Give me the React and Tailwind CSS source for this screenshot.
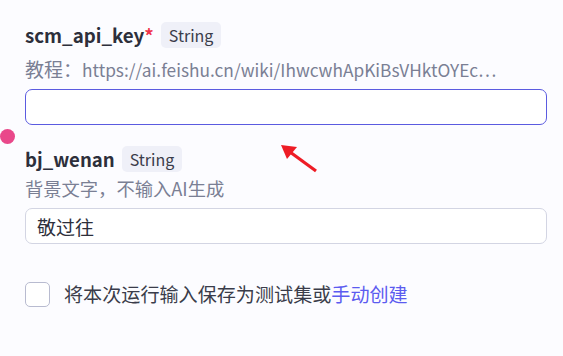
import React from "react";

const Tag = () => (
  <span className="ml-[7px] inline-flex h-[26px] items-center rounded-[5px] bg-[#eff0f8] px-[8px] text-[16px] text-[#3a3c4a]">
    String
  </span>
);

export default function App() {
  return (
    <div
      className="relative h-[356px] w-[563px] overflow-hidden bg-[#fcfcff]"
      style={{ fontFamily: '"Noto Sans CJK SC", "Noto Sans", sans-serif' }}
    >
      <div className="pl-[25px] pr-[16px] pt-[22px]">
        {/* scm_api_key */}
        <div className="flex h-[26px] items-center">
          <span className="text-[18.7px] font-semibold text-[#2d2f3b]">scm_api_key</span>
          <span className="text-[18.7px] font-semibold text-[#f0344a]">*</span>
          <Tag />
        </div>
        <div className="mt-[10px] h-[22px] whitespace-nowrap leading-[22px] text-[#7a7f94]">
          <span className="text-[19px]">教程：</span>
          <span className="text-[17.3px]">https://ai.feishu.cn/wiki/IhwcwhApKiBsVHktOYEc⋯</span>
        </div>
        <input
          className="mt-[9px] block h-[36px] w-[522px] rounded-[7px] border border-[#5b5be0] bg-white px-[11px] text-[19px] outline-none"
          defaultValue=""
        />

        {/* bj_wenan */}
        <div className="mt-[21px] flex h-[26px] items-center">
          <span className="text-[18.6px] font-semibold text-[#2d2f3b]">bj_wenan</span>
          <Tag />
        </div>
        <div className="mt-[5px] h-[22px] text-[18.3px] leading-[22px] text-[#7a7f94]">
          背景文字，不输入AI生成
        </div>
        <input
          className="mt-[9px] block h-[36px] w-[522px] rounded-[7px] border border-[#d3d5e3] bg-white px-[11px] text-[19px] text-[#2d2f3b] outline-none"
          defaultValue="敬过往"
        />

        {/* checkbox */}
        <label className="mt-[36px] flex items-center">
          <span className="h-[25px] w-[25px] rounded-[5px] border border-[#b8bbd0] bg-white" />
          <span className="ml-[14px] text-[19.1px] text-[#3a3c4a]">
            将本次运行输入保存为测试集或<span className="text-[#5b5bf0]">手动创建</span>
          </span>
        </label>
      </div>

      {/* pink marker */}
      <div className="absolute left-0 top-[129px] h-[15px] w-[15px] rounded-full bg-[#e9488a]" />

      {/* red arrow annotation */}
      <svg className="absolute left-[278px] top-[142px]" width="44" height="34" viewBox="0 0 44 34">
        <line x1="12" y1="10" x2="38" y2="29" stroke="#ee1c25" strokeWidth="3.2" />
        <polygon points="3,3 19,5 9,17" fill="#ee1c25" />
      </svg>
    </div>
  );
}
